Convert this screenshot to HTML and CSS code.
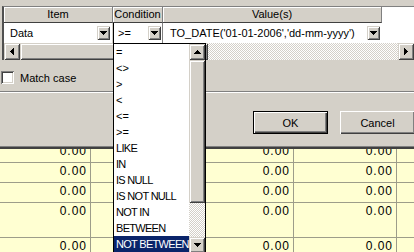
FILE: index.html
```html
<!doctype html>
<html lang="en">
<head>
	<meta charset="UTF-8">
	<title>Condition</title>
	<link rel="stylesheet" href="styles.css">
</head>
<body>
	<div class="dlg">
		<div class="editor">
			<div class="ed-head">
				<div class="hc c-item">Item</div>
				<div class="hc c-cond">Condition</div>
				<div class="hc c-val">Value(s)</div>
			</div>
			<div class="ed-row">
				<div class="cell c-item">
					<span class="txt t-item">Data</span>
					<span class="drop"><svg width="7" height="4"><path d="M0 0H7V1H6V2H5V3H4V4H3V3H2V2H1V1H0Z"/></svg></span>
				</div>
				<div class="cell c-cond">
					<span class="txt t-cond">&gt;=</span>
					<span class="drop"><svg width="7" height="4"><path d="M0 0H7V1H6V2H5V3H4V4H3V3H2V2H1V1H0Z"/></svg></span>
				</div>
				<div class="cell c-val">
					<span class="txt t-val">TO_DATE('01-01-2006','dd-mm-yyyy')</span>
					<span class="drop"><svg width="7" height="4"><path d="M0 0H7V1H6V2H5V3H4V4H3V3H2V2H1V1H0Z"/></svg></span>
				</div>
			</div>
			<div class="hscroll">
				<span class="sbtn"><svg width="4" height="7"><path d="M3 0H4V7H3V6H2V5H1V4H0V3H1V2H2V1H3Z"/></svg></span>
				<span class="thumb h-thumb"></span>
				<span class="track"></span>
				<span class="sbtn"><svg width="4" height="7"><path d="M0 0H1V1H2V2H3V3H4V4H3V5H2V6H1V7H0Z"/></svg></span>
			</div>
		</div>

		<label class="check"><span class="box"></span>Match case</label>
		<div class="sep"></div>

		<div class="actions">
			<button class="btn default">OK</button>
			<button class="btn">Cancel</button>
		</div>

		<div class="grid">
			<div class="grow first"><div class="gc g1">0.00</div><div class="gc g2">0.00</div><div class="gc g3">0.00</div><div class="gc g4"></div></div>
			<div class="grow"><div class="gc g1">0.00</div><div class="gc g2">0.00</div><div class="gc g3">0.00</div><div class="gc g4"></div></div>
			<div class="grow"><div class="gc g1">0.00</div><div class="gc g2">0.00</div><div class="gc g3">0.00</div><div class="gc g4"></div></div>
			<div class="grow tall"><div class="gc g1">0.00</div><div class="gc g2">0.00</div><div class="gc g3">0.00</div><div class="gc g4"></div></div>
			<div class="grow"><div class="gc g1">0.00</div><div class="gc g2">0.00</div><div class="gc g3">0.00</div><div class="gc g4"></div></div>
		</div>

		<!-- open combo list of the Condition cell -->
		<div class="droplist">
			<ul class="opts">
				<li class="sym">=</li>
				<li class="sym">&lt;&gt;</li>
				<li class="sym">&gt;</li>
				<li class="sym">&lt;</li>
				<li class="sym">&lt;=</li>
				<li class="sym">&gt;=</li>
				<li>LIKE</li>
				<li>IN</li>
				<li>IS NULL</li>
				<li>IS NOT NULL</li>
				<li>NOT IN</li>
				<li>BETWEEN</li>
				<li class="sel">NOT BETWEEN</li>
			</ul>
			<div class="vscroll">
				<span class="sbtn v"><svg width="7" height="4"><path d="M3 0H4V1H5V2H6V3H7V4H0V3H1V2H2V1H3Z"/></svg></span>
				<span class="thumb v-thumb"></span>
				<span class="track"></span>
				<span class="sbtn v"><svg width="7" height="4"><path d="M0 0H7V1H6V2H5V3H4V4H3V3H2V2H1V1H0Z"/></svg></span>
			</div>
		</div>
	</div>
</body>
</html>
```

FILE: styles.css
```css
*{margin:0;padding:0;box-sizing:border-box;list-style:none;}
body{width:414px;height:252px;overflow:hidden;background:#d4d0c8;font:11px "Liberation Sans",Arial,sans-serif;color:#000;}
svg{display:block;shape-rendering:crispEdges;}

.dlg{position:relative;height:252px;padding-top:6px;}

/* criteria editor */
.editor{margin-left:2px;border-top:1px solid #808080;border-left:2px solid #505050;background:#fff;}
.ed-head{display:flex;height:16px;}
.hc{height:16px;line-height:15px;text-align:center;background:#d4d0c8;border-bottom:1px solid #404040;border-right:1px solid #808080;box-shadow:inset 1px 1px #fff;}
.c-item{width:109px;}
.c-cond{width:50px;}
.c-val{width:219px;}

.ed-row{display:flex;height:20px;}
.cell{display:flex;align-items:center;height:20px;line-height:20px;}
.ed-row .c-item{border-right:1px solid #d4d0c8;}
.ed-row .c-cond{border-left:1px solid #000;border-right:1px solid #808080;}
.txt{flex:1;white-space:nowrap;}
.t-item{padding-left:6px;}
.t-cond{padding-left:4px;}
.t-val{padding-left:7px;}
.drop{width:13px;height:14px;margin-right:2px;display:flex;align-items:center;justify-content:center;background:#d4d0c8;box-shadow:inset 1px 1px #d4d0c8,inset -1px -1px #404040,inset 2px 2px #fff,inset -2px -2px #808080;}
.c-cond .drop{margin-right:1px;}

/* scroll bars */
.hscroll{display:flex;height:17px;}
.track{flex:1;background:repeating-conic-gradient(#d4d0c8 0 25%,#fff 0 50%) 0 0/2px 2px;}
.sbtn{width:16px;height:17px;display:flex;align-items:center;justify-content:center;background:#d4d0c8;box-shadow:inset 1px 1px #d4d0c8,inset -1px -1px #404040,inset 2px 2px #fff,inset -2px -2px #808080;}
.thumb{background:#d4d0c8;box-shadow:inset 1px 1px #d4d0c8,inset -1px -1px #404040,inset 2px 2px #fff,inset -2px -2px #808080;}
.h-thumb{width:188px;}

/* options */
.check{display:flex;align-items:center;height:13px;margin:11px 0 0 1px;}
.check .box{width:13px;height:13px;margin-right:6px;background:#fff;box-shadow:inset 1px 1px #808080,inset -1px -1px #fff,inset 2px 2px #404040,inset -2px -2px #d4d0c8;}
.sep{margin-top:7px;height:2px;border-top:1px solid #808080;border-bottom:1px solid #fff;}

.actions{display:flex;justify-content:flex-end;gap:12px;margin:18px -1px 0 0;}
.btn{width:75px;height:23px;font:inherit;color:#000;background:#d4d0c8;border:0;box-shadow:inset 1px 1px #fff,inset -1px -1px #404040,inset -2px -2px #808080;}
.btn.default{box-shadow:inset 0 0 0 1px #000,inset 2px 2px #fff,inset -2px -2px #404040,inset -3px -3px #808080;}

/* result grid */
.grid{margin-top:13px;height:110px;overflow:hidden;background:#ffffd2;border-top:2px solid #404040;box-shadow:0 -1px #808080;}
.grow{display:flex;height:20px;border-bottom:1px solid #9d9d8a;}
.grow.first{margin-top:-6px;}
.grow.tall{height:35px;}
.gc{text-align:right;border-right:1px solid #9d9d8a;padding:1px 3px 0 0;font-size:12px;line-height:14px;letter-spacing:1px;}
.g1{width:91px;}
.g2{width:203px;}
.g3{width:103px;}
.g4{flex:1;border-right:0;}

/* dropped list */
.droplist{position:absolute;left:113px;top:43px;width:93px;height:210px;display:flex;background:#fff;border:1px solid #000;border-bottom:0;}
.opts{width:75px;}
.opts li{height:16px;line-height:16px;padding-left:2px;letter-spacing:-0.7px;white-space:nowrap;}
.opts li.sym{letter-spacing:0;}
.opts li.sel{background:#0a246a;color:#fff;}
.vscroll{width:16px;display:flex;flex-direction:column;}
.sbtn.v{height:16px;}
.v-thumb{height:143px;}
```
